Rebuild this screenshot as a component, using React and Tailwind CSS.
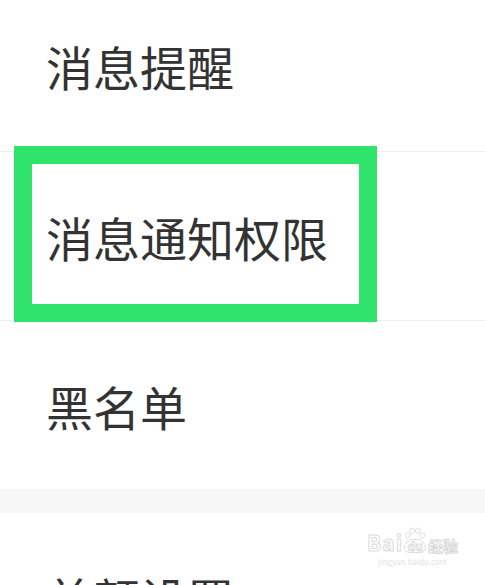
const rows = ["消息提醒", "消息通知权限", "黑名单"];

function Watermark() {
  return (
    <div className="absolute left-[367px] top-[527px] flex flex-col items-center">
      <div className="flex items-end leading-none">
        <span className="text-[21px] font-bold tracking-[1px] text-white [-webkit-text-stroke:1px_#dcdcdc]">Bai</span>
        <div className="mx-[1px] flex flex-col items-center">
          <svg width="22" height="13" viewBox="0 0 24 14" className="mb-[-1px]">
            <g fill="none" stroke="#dcdcdc" strokeWidth="1">
              <ellipse cx="4" cy="9" rx="2.5" ry="3" />
              <ellipse cx="9" cy="4" rx="2.5" ry="3" />
              <ellipse cx="15" cy="4" rx="2.5" ry="3" />
              <ellipse cx="20" cy="9" rx="2.5" ry="3" />
            </g>
          </svg>
          <span className="rounded-t-[10px] rounded-b-[6px] border border-[#dcdcdc] px-[2px] text-[12px] font-bold text-white [-webkit-text-stroke:0.8px_#d6d6d6]">du</span>
        </div>
        <span className="ml-[1px] text-[15px] font-bold text-white [-webkit-text-stroke:0.8px_#d6d6d6]">经验</span>
      </div>
      <span className="mt-[5px] text-[8px] leading-none text-[#e4e4e4]">jingyan.baidu.com</span>
    </div>
  );
}

export default function App() {
  return (
    <div
      className="relative h-[585px] w-[485px] overflow-hidden bg-white text-[#333333]"
      style={{ fontFamily: '"Noto Sans CJK SC", "Noto Sans", sans-serif' }}
    >
      <div className="flex h-[151px] items-center pb-5 pl-[46px] text-[47px] leading-none">
        {rows[0]}
      </div>
      {rows.slice(1).map((label) => (
        <div
          key={label}
          className="flex h-[169px] items-center border-t border-[#eeeeee] pl-[46px] text-[47px] leading-none"
        >
          {label}
        </div>
      ))}
      <div className="h-[24px] bg-[#f7f7f7]" />
      <div className="flex h-[169px] items-center pl-[46px] text-[47px] leading-none">美颜设置</div>

      <div className="absolute left-[14px] top-[146px] h-[176px] w-[363px] border-[18px] border-[#30e36c]" />
      <Watermark />
    </div>
  );
}
